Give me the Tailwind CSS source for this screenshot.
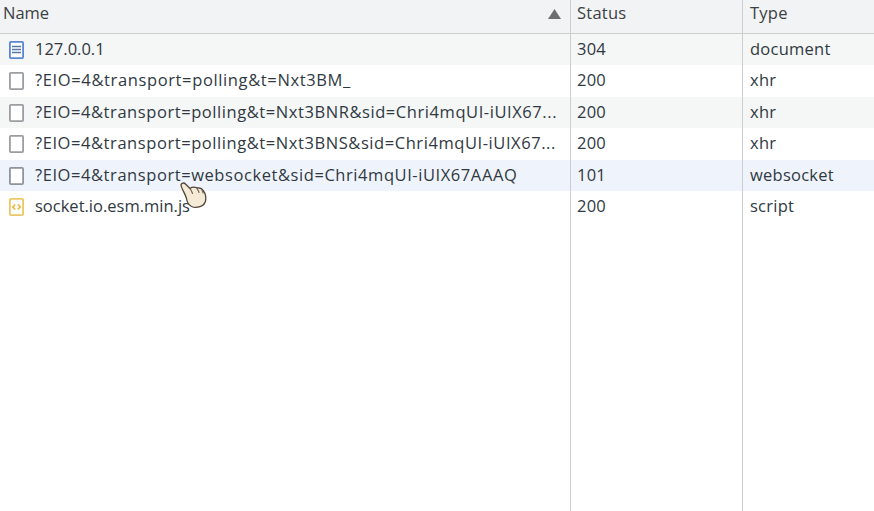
<!DOCTYPE html>
<html lang="en">
<head>
<meta charset="UTF-8">
<title>Network</title>
<script src="https://cdn.jsdelivr.net/npm/@tailwindcss/browser@4"></script>
</head>
<body class="bg-white">
<div class="relative w-[874px] h-[511px] overflow-hidden font-['Open_Sans',sans-serif] text-[16.5px] text-[#303942]">
  <!-- Header -->
  <div class="flex h-[34px] bg-[#f1f3f4] border-b border-[#cdcdcd] text-[#3c4043]">
    <div class="w-[571px] shrink-0 border-r border-[#cdcdcd] pl-[3px] flex items-center justify-between pr-[9px] pb-[6px]">
      <span>Name</span>
      <svg class="w-[13px] h-[10px]" viewBox="0 0 13 10"><path d="M6.5 0 13 10H0Z" fill="#6e6e6e"/></svg>
    </div>
    <div class="w-[172px] shrink-0 border-r border-[#cdcdcd] pl-[6px] flex items-center pb-[6px] tracking-[0.25px]">Status</div>
    <div class="pl-[7px] flex items-center pb-[6px] tracking-[0.25px]">Type</div>
  </div>

  <!-- Rows -->
  <div class="flex h-[31px] bg-[#f5f6f6] items-center">
    <div class="w-[571px] shrink-0 border-r border-[#cdcdcd] h-full flex items-center pl-[9px]">
      <svg class="w-[15px] h-[18px] shrink-0 mr-[11px]" viewBox="0 0 15 18"><rect x="0.9" y="0.9" width="13.2" height="16.2" rx="1" fill="#fff" stroke="#5a85d6" stroke-width="1.8"/><path d="M3 5.500h9M3 8.500h9M3 11.500h9" stroke="#5577a8" stroke-width="1.500"/></svg>
      <span class="truncate">127.0.0.1</span>
    </div>
    <div class="w-[172px] shrink-0 border-r border-[#cdcdcd] h-full flex items-center pl-[6px] tracking-[0.25px]">304</div>
    <div class="pl-[7px] tracking-[0.25px]">document</div>
  </div>
  <div class="flex h-[32px] bg-white items-center">
    <div class="w-[571px] shrink-0 border-r border-[#cdcdcd] h-full flex items-center pl-[9px]">
      <svg class="w-[15px] h-[18px] shrink-0 mr-[11px]" viewBox="0 0 15 18"><rect x="0.9" y="0.9" width="13.2" height="16.2" rx="1" fill="#fff" stroke="#9a9da1" stroke-width="1.8"/></svg>
      <span class="truncate tracking-[0.63px] pb-[2px]">?EIO=4&amp;transport=polling&amp;t=Nxt3BM_</span>
    </div>
    <div class="w-[172px] shrink-0 border-r border-[#cdcdcd] h-full flex items-center pl-[6px] pb-[2px] tracking-[0.25px]">200</div>
    <div class="pl-[7px] pb-[2px] tracking-[0.25px]">xhr</div>
  </div>
  <div class="flex h-[31px] bg-[#f5f6f6] items-center">
    <div class="w-[571px] shrink-0 border-r border-[#cdcdcd] h-full flex items-center pl-[9px]">
      <svg class="w-[15px] h-[18px] shrink-0 mr-[11px]" viewBox="0 0 15 18"><rect x="0.9" y="0.9" width="13.2" height="16.2" rx="1" fill="#fff" stroke="#9a9da1" stroke-width="1.8"/></svg>
      <span class="truncate tracking-[0.57px]">?EIO=4&amp;transport=polling&amp;t=Nxt3BNR&amp;sid=Chri4mqUI-iUIX67...</span>
    </div>
    <div class="w-[172px] shrink-0 border-r border-[#cdcdcd] h-full flex items-center pl-[6px] tracking-[0.25px]">200</div>
    <div class="pl-[7px] tracking-[0.25px]">xhr</div>
  </div>
  <div class="flex h-[32px] bg-white items-center">
    <div class="w-[571px] shrink-0 border-r border-[#cdcdcd] h-full flex items-center pl-[9px]">
      <svg class="w-[15px] h-[18px] shrink-0 mr-[11px]" viewBox="0 0 15 18"><rect x="0.9" y="0.9" width="13.2" height="16.2" rx="1" fill="#fff" stroke="#9a9da1" stroke-width="1.8"/></svg>
      <span class="truncate tracking-[0.57px] pb-[2px]">?EIO=4&amp;transport=polling&amp;t=Nxt3BNS&amp;sid=Chri4mqUI-iUIX67...</span>
    </div>
    <div class="w-[172px] shrink-0 border-r border-[#cdcdcd] h-full flex items-center pl-[6px] pb-[2px] tracking-[0.25px]">200</div>
    <div class="pl-[7px] pb-[2px] tracking-[0.25px]">xhr</div>
  </div>
  <div class="flex h-[31px] bg-[#eff4fc] items-center">
    <div class="w-[571px] shrink-0 border-r border-[#cdcdcd] h-full flex items-center pl-[9px]">
      <svg class="w-[15px] h-[18px] shrink-0 mr-[11px]" viewBox="0 0 15 18"><rect x="0.9" y="0.9" width="13.2" height="16.2" rx="1" fill="#fff" stroke="#8e939c" stroke-width="1.8"/></svg>
      <span class="truncate tracking-[0.57px]">?EIO=4&amp;transport=websocket&amp;sid=Chri4mqUI-iUIX67AAAQ</span>
    </div>
    <div class="w-[172px] shrink-0 border-r border-[#cdcdcd] h-full flex items-center pl-[6px] tracking-[0.25px]">101</div>
    <div class="pl-[7px] tracking-[0.25px]">websocket</div>
  </div>
  <div class="flex h-[32px] bg-white items-center">
    <div class="w-[571px] shrink-0 border-r border-[#cdcdcd] h-full flex items-center pl-[9px]">
      <svg class="w-[15px] h-[18px] shrink-0 mr-[11px]" viewBox="0 0 15 18"><rect x="0.9" y="0.9" width="13.2" height="16.2" rx="1" fill="#fff" stroke="#ecc765" stroke-width="1.8"/><path d="M6.200 6.500 3.800 9l2.400 2.500M8.800 6.500 11.200 9l-2.400 2.500" fill="none" stroke="#e9b93f" stroke-width="1.700"/></svg>
      <span class="truncate pb-[2px]">socket.io.esm.min.js</span>
    </div>
    <div class="w-[172px] shrink-0 border-r border-[#cdcdcd] h-full flex items-center pl-[6px] pb-[2px] tracking-[0.25px]">200</div>
    <div class="pl-[7px] pb-[2px] tracking-[0.25px]">script</div>
  </div>
  <!-- Empty area keeps the column lines going -->
  <div class="flex h-[288px]">
    <div class="w-[571px] shrink-0 border-r border-[#cdcdcd]"></div>
    <div class="w-[172px] shrink-0 border-r border-[#cdcdcd]"></div>
  </div>

  <!-- Hand cursor -->
  <svg class="absolute left-[179px] top-[181px] w-[29px] h-[28px]" viewBox="0 0 29 28">
    <path d="M2 4C2.500 1.800 5 1.300 6.500 3L11 7.500C13 6 16 6 18 7 20.500 6.500 23 7.500 24.500 10 27 13 27.500 18 26 21.500 24 26 17 27.500 12.500 25.500 9.500 24 8 21 7.500 17.500 6.500 13 2.500 8 2 4Z" fill="#f4ead6" stroke="#4f4437" stroke-width="1.300" stroke-linejoin="round"/>
    <path d="M11 7.500C12 9 13 11 13.500 12.500M18 7C18.500 8.500 19.500 10 20 11.500M23 9C23.500 10 24 11 24 12" fill="none" stroke="#6b5d4c" stroke-width="1.100" stroke-linecap="round"/>
  </svg>
</div>
</body>
</html>
